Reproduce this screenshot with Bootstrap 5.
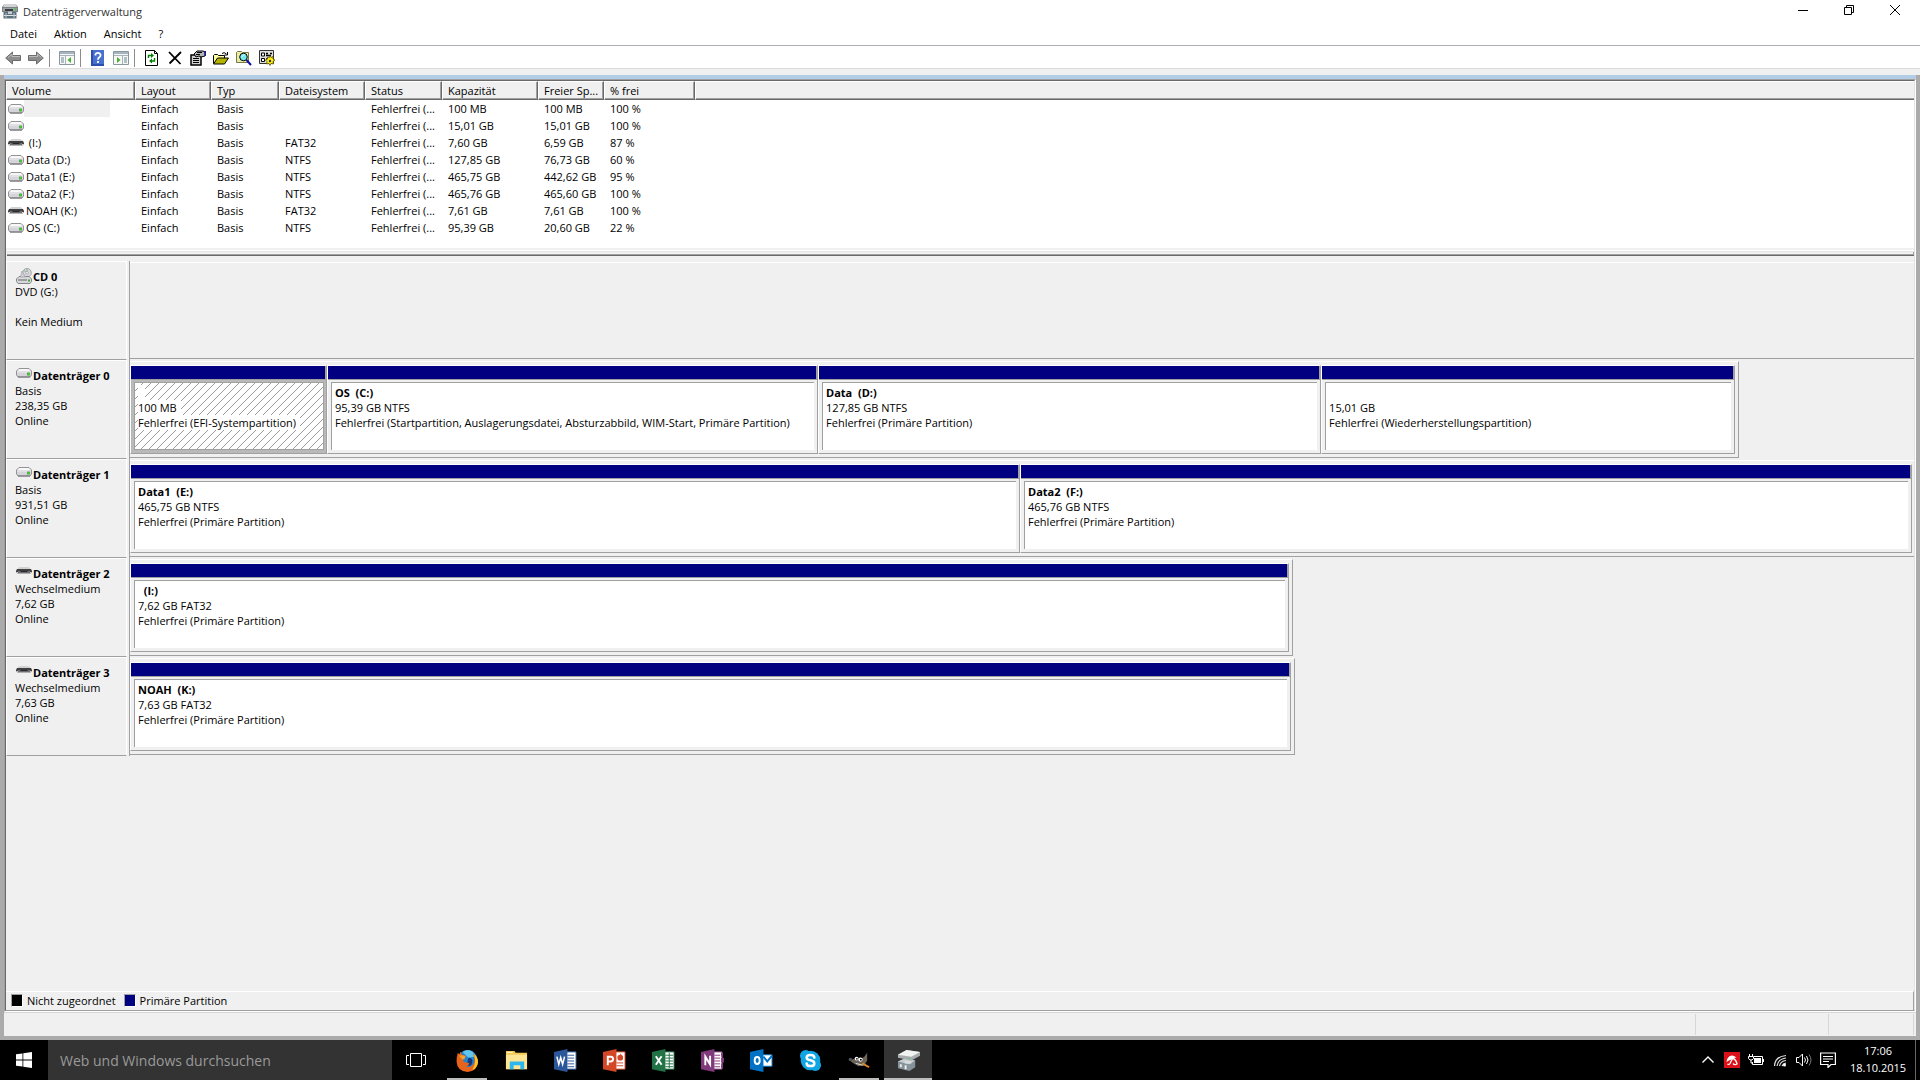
<!DOCTYPE html>
<html lang="de">
<head>
<meta charset="utf-8">
<title>Datenträgerverwaltung</title>
<meta name="viewport" content="width=device-width, initial-scale=1">
<link href="https://cdn.jsdelivr.net/npm/bootstrap@5.3.0/dist/css/bootstrap.min.css" rel="stylesheet">
<style>
  body { font-family: "Open Sans", "Noto Sans", sans-serif; font-size: 11px; line-height: 15px; color: #000; background: #fff; }
  button, input { font: inherit; }
  svg { display: block; flex: none; }
  .plain-btn { border: 0; background: none; color: inherit; padding: 0; display: flex; align-items: center; justify-content: center; }

  /* title, menu, toolbar */
  .titlebar { height: 23px; padding: 0 2px; }
  .titlebar h1 { font-size: 11px; line-height: 15px; color: #333; margin: 4px 0 0 5px; }
  .win-btn { width: 46px; height: 20px; }
  .menubar { height: 22px; padding: 0 0 2px 2px; gap: 1px; }
  .menubar .plain-btn { padding: 0 8px; }
  .toolbar { height: 24px; border-top: 1px solid #adadb5; border-bottom: 1px solid #dcdcdc; padding-left: 1px; padding-top: 2px; }
  .tool-btn { width: 23px; height: 20px; }
  .tool-sep { width: 1px; height: 18px; background: #8c8c8c; margin: 1px 5px 0 2px; }
  .under-toolbar { height: 6px; background: #f0f0f0; }

  /* window frame */
  .win-frame { background: #f0f0f0; border: solid #ababab; border-width: 0 4px 4px; }
  .accent-strip { height: 4px; background: #b4cde6; }
  .client { border: solid; border-width: 1px; border-color: #a0a0a0 #fff #fff #a0a0a0; }
  .client-inner { border: solid; border-width: 1px; border-color: #696969 #e3e3e3 #a0a0a0 #696969; }

  /* volume list */
  .volume-pane { height: 167px; background: #fff; overflow: hidden; }
  .volume-table { table-layout: fixed; width: 100%; border-collapse: separate; border-spacing: 0; }
  .volume-table th { height: 19px; padding: 0 0 1px 5px; font-weight: 400; line-height: 15px; background: #f0f0f0; border: 1px solid; border-color: #fff #696969 #696969 #fff; box-shadow: inset -1px -1px 0 #a0a0a0; white-space: nowrap; }
  .volume-table th:last-child { border-right: 0; box-shadow: inset 0 -1px 0 #a0a0a0; }
  .volume-table td { height: 17px; padding: 0 0 0 6px; line-height: 17px; white-space: nowrap; overflow: hidden; }
  .volume-table td:first-child { padding-left: 2px; }
  .vol-name { height: 17px; padding-left: 2px; white-space: pre; }
  .vol-name.active { width: 86px; background: #f0f0f0; }
  .splitter { height: 8px; margin-left: 1px; border-top: 2px solid #f0f0f0; border-bottom: 1px solid #696969; box-shadow: inset 0 1px 0 #fff, inset 0 2px 0 #e3e3e3, inset -1px -1px 0 #a0a0a0; }

  /* graphical view */
  .graph-pane { padding-top: 5px; }
  .disk-row { height: 99px; }
  .disk-label { width: 121px; border: solid; border-width: 1px; border-color: #fff #fff #a0a0a0 #fff; padding: 7px 0 0 8px; }
  .disk-area { border-left: 1px solid #a0a0a0; margin-left: 2px; }
  .disk-frame { display: grid; height: 97px; margin-top: 1px; border: solid; border-width: 1px 1px 1px 0; border-color: #fff #a0a0a0 #a0a0a0; padding: 3px 3px 3px 0; }
  .disk-frame.full { border-right: 0; padding-right: 2px; }
  .disk-name { font-weight: 700; height: 15px; padding-left: 1px; gap: 1px; }
  .partition { min-width: 0; border: solid; border-width: 1px; border-color: #fff #a0a0a0 #a0a0a0 #fff; text-align: left; display: flex; flex-direction: column; background: #f0f0f0; padding: 0; color: inherit; }
  .part-bar { height: 14px; background: #000080; border-right: 1px solid #a0a0a0; border-bottom: 1px solid #a0a0a0; align-self: stretch; }
  .part-body { flex: 1; align-self: stretch; margin: 2px 3px 3px; background: #fff; border: solid #a0a0a0; border-width: 1px 0 0 1px; padding: 2px 0 0 3px; white-space: pre; overflow: hidden; }
  .part-body span, .part-body b { display: block; width: fit-content; min-width: 7px; height: 15px; }
  .partition.selected { background: #b9b9b9; }
  .selected .part-body { border-width: 1px; margin-right: 2px; background: linear-gradient(135deg, #fff 45%, #9a9a9a 45% 55%, #fff 55%) 0 0 / 8px 8px; }
  .selected .part-body span, .selected .part-body b { background: #fff; padding-right: 4px; }

  .legend-bar { height: 19px; border-top: 1px solid #fff; border-right: 1px solid #a0a0a0; padding: 0 0 1px 5px; }
  .legend-key { width: 12px; height: 13px; border: 1px solid; border-color: #a0a0a0 #fff #fff #a0a0a0; margin-right: 4px; }
  .legend-text { margin-right: 8px; }
  .status-line { height: 24px; border-top: 1px solid #d7d7d7; padding: 1px 2px 1px 0; }
  .status-cell { border-right: 1px solid #d7d7d7; }

  /* taskbar */
  .taskbar { height: 40px; background: #000; color: #fff; }
  .start-btn { width: 48px; }
  .view-btn { width: 50px; padding-right: 2px; }
  .search-field { width: 344px; border: 0; background: #333; color: #fff; padding: 0 12px; font-size: 14px; }
  .search-field::placeholder { color: #9a9a9a; opacity: 1; }
  .task-btn { width: 48px; margin-left: 1px; border: solid transparent; border-width: 2px 0; }
  .task-btn svg { width: 23px; height: 23px; }
  .task-btn.running { background: linear-gradient(#bdbdbd, #bdbdbd) center bottom / 40px 2px no-repeat border-box; }
  .task-btn.current { background: #333; border-bottom-color: #bdbdbd; }
  .tray { gap: 8px; }
  .clock { width: 68px; margin-right: 3px; padding-bottom: 3px; text-align: center; line-height: 17px; }
  .desktop-edge { width: 5px; border-left: 1px solid #666; }
</style>
<script src="https://cdn.jsdelivr.net/npm/bootstrap@5.3.0/dist/js/bootstrap.bundle.min.js"></script>
</head>
<body class="d-flex flex-column vh-100 overflow-hidden">

<svg width="0" height="0" class="position-absolute" aria-hidden="true">
  <defs>
    <symbol id="i-drive" viewBox="0 0 16 10">
      <path d="M3 .5h10l2.500 2.500v4L14 9H2L.5 7V3z" fill="#d4d4da" stroke="#929297"/>
      <path d="M3.500 1h9l2 2h-13z" fill="#f8f8f8"/><path d="M1 3.500h14v1H1z" fill="#ececf0"/><path d="M2 9h12" stroke="#707075"/>
      <path d="M11 4.500h3v3h-3z" fill="#62a35c"/><path d="M12 5h1.500v2H12z" fill="#35d020"/>
    </symbol>
    <symbol id="i-removable" viewBox="0 0 16 10">
      <path d="M3.500 1h9L15 3H1z" fill="#d2d2d2"/><path d="M1 3h14l1 2v1.500l-3-1H3l-3 1V5z" fill="#3f3f42"/><path d="M3 5h10l2 2.500H1z" fill="#6e6e72"/><path d="M5 5h6l1 1H4z" fill="#29292b"/>
    </symbol>
    <symbol id="i-cd" viewBox="0 0 16 16">
      <circle cx="11" cy="4.800" r="4.300" fill="#d8d8de" stroke="#a2a2a8"/><circle cx="11" cy="4.800" r="1.300" fill="#fff" stroke="#888" stroke-width=".6"/><path d="M11 .8v3M8 2.500l2 1.500" stroke="#8bb48b"/>
      <path d="M3 8.500h10l2.500 2.500v2.500L14 15.500H2L.5 13.500V11z" fill="#d8d8dc" stroke="#85858a"/><path d="M2 11.500h9v1H2z" fill="#666"/><path d="M12 11.500h2v2h-2z" fill="#37b427"/><path d="M6 3L4.500 9h5z" fill="#d0d0d4" stroke="#96969a" stroke-width=".6"/>
    </symbol>
    <symbol id="i-office" viewBox="0 0 24 24"><path d="M0 3L14 0v24L0 21z"/></symbol>
  </defs>
</svg>

<header class="titlebar d-flex align-items-start">
  <svg class="mt-1" width="16" height="15" viewBox="0 0 16 15"><path d="M2.500 0h11L16 3v5H0V3z" fill="#7d8488"/><path d="M2.500 0h11L15 3H1z" fill="#d2d4d5"/><path d="M1 4h14v3H1z" fill="#9ea4a7"/><path d="M3 5h8v2H3z" fill="#363c40"/><path d="M12.500 4.500h2v2h-2z" fill="#41c041"/><path d="M1.500 8h13v6.500h-13z" fill="#5d717c"/><path d="M2 11.500h12" stroke="#dfe6ea"/><path d="M4 9v5M12 9v5" stroke="#b9c6cc"/><path d="M6 7.500h4V10H6z" fill="#c5d0d5"/></svg>
  <h1 class="fw-normal">Datenträgerverwaltung</h1>
  <div class="d-flex ms-auto">
    <button class="plain-btn win-btn" aria-label="Minimieren"><svg width="10" height="10" viewBox="0 0 10 10"><path d="M0 5.500h10" stroke="#000"/></svg></button>
    <button class="plain-btn win-btn" aria-label="Verkleinern"><svg width="10" height="10" viewBox="0 0 10 10" fill="none" stroke="#000"><path d="M.5 2.500h7v7h-7zM2.500 2.500v-2h7v7h-2"/></svg></button>
    <button class="plain-btn win-btn" aria-label="Schließen"><svg width="10" height="10" viewBox="0 0 10 10"><path d="M0 0l10 10M10 0L0 10" stroke="#000"/></svg></button>
  </div>
</header>

<nav class="menubar d-flex" aria-label="Menü">
  <button class="plain-btn">Datei</button><button class="plain-btn">Aktion</button><button class="plain-btn">Ansicht</button><button class="plain-btn">?</button>
</nav>

<div class="toolbar d-flex" role="toolbar" aria-label="Symbolleiste">
  <button class="plain-btn tool-btn" aria-label="Zurück"><svg width="16" height="14" viewBox="0 0 16 14"><path d="M7.500 1v3.500h8v5h-8V13L.7 7z" fill="#8d8d8d" stroke="#6b6b6b"/><path d="M3 6.500l4-3.500v2.500h8" stroke="#bcbcbc" fill="none"/></svg></button>
  <button class="plain-btn tool-btn" aria-label="Vorwärts"><svg width="16" height="14" viewBox="0 0 16 14"><path d="M8.500 1v3.500h-8v5h8V13l6.800-6z" fill="#8d8d8d" stroke="#6b6b6b"/><path d="M1 5.500h8.500V3l4 3.500" stroke="#bcbcbc" fill="none"/></svg></button>
  <div class="tool-sep"></div>
  <button class="plain-btn tool-btn" aria-label="Konsolenstruktur anzeigen"><svg width="16" height="14" viewBox="0 0 16 14"><path d="M.5.5h15v13H.5z" fill="#f7f7f5" stroke="#8b979f"/><path d="M1 1h14v2H1z" fill="#a6b4bd"/><path d="M1 4.500h14M6.500 5v8" stroke="#a6b4bd"/><path d="M2 7h3M2 9h3M2 11h3" stroke="#6f8696"/><path d="M12 6v6L8.500 9z" fill="#4aae3c"/></svg></button>
  <div class="tool-sep"></div>
  <button class="plain-btn tool-btn" aria-label="Hilfe"><svg width="13" height="16" viewBox="0 0 13 16"><path d="M0 0h13v16H0z" fill="#2c4fae"/><path d="M2 0h11v14H2z" fill="#4870cf"/><path d="M4.500 5.500V4.300Q5 2.800 7 2.800T9.600 5Q9.600 6.500 8.300 7.300T7 9.800M7 11v2" fill="none" stroke="#fff" stroke-width="1.800"/></svg></button>
  <button class="plain-btn tool-btn" aria-label="Aktionsbereich anzeigen"><svg width="16" height="14" viewBox="0 0 16 14"><path d="M.5.5h15v13H.5z" fill="#f7f7f5" stroke="#8b979f"/><path d="M1 1h14v2H1z" fill="#a6b4bd"/><path d="M1 4.500h14M9.500 5v8" stroke="#a6b4bd"/><path d="M11 7h3M11 9h3M11 11h3" stroke="#6f8696"/><path d="M4 6v6l3.500-3z" fill="#4aae3c"/></svg></button>
  <div class="tool-sep"></div>
  <button class="plain-btn tool-btn" aria-label="Aktualisieren"><svg width="13" height="16" viewBox="0 0 13 16"><path d="M.5.500h9l3 3v12H.5z" fill="#fff" stroke="#000"/><path d="M9.500.500v3h3" fill="none" stroke="#000"/><path d="M3.500 8V5.500H7M9.500 8v3H6" fill="none" stroke="#008000" stroke-width="1.400"/><path d="M6 3l3 2.500L6 8zM7 8.500L4 11l3 2.500z" fill="#008000"/></svg></button>
  <button class="plain-btn tool-btn" aria-label="Löschen"><svg width="14" height="14" viewBox="0 0 14 14"><path d="M1 1l11.500 12M13 1L1.500 12.500" stroke="#000" stroke-width="1.800"/></svg></button>
  <button class="plain-btn tool-btn" aria-label="Eigenschaften"><svg width="16" height="16" viewBox="0 0 16 16"><path d="M1 5h10v10H1z" fill="#d0d0d0" stroke="#000" stroke-width="1.500"/><path d="M3 8.500h6M3 10.500h6M3 12.500h6" stroke="#000"/><path d="M4 4l3-3h6l2 1v4l-4 1-2-1-3 1z" fill="#b5b5b5" stroke="#000"/><path d="M6 4.500h4M7 2.500h5" stroke="#000"/><path d="M14 1h2v5h-1z" fill="#1919a0"/></svg></button>
  <button class="plain-btn tool-btn" aria-label="Öffnen"><svg width="16" height="14" viewBox="0 0 16 14"><path d="M.5 12.500v-8l1-1h3l1 1h6v3" fill="#ffffa0" stroke="#000"/><path d="M.5 13l4-6h11l-4 6z" fill="#b4b400" stroke="#000"/><path d="M9 2.500q2-2 4.500.5M14.500 1v3h-3" fill="none" stroke="#000"/></svg></button>
  <button class="plain-btn tool-btn" aria-label="Suchen"><svg width="16" height="16" viewBox="0 0 16 16"><path d="M.5 12.500v-10l1-1h4l1 1h6v10z" fill="#ececa0" stroke="#77774a"/><circle cx="7.500" cy="7" r="3.800" fill="#6fe8f0" stroke="#000"/><path d="M5.500 7l3-2.500" stroke="#fff"/><path d="M10.500 10l4.500 5" stroke="#1010a8" stroke-width="2"/></svg></button>
  <button class="plain-btn tool-btn" aria-label="Einstellungen"><svg width="16" height="16" viewBox="0 0 16 16"><path d="M.5.500h14v13H.5z" fill="#dedede" stroke="#333"/><path d="M2.500 3h3v3h-3zM2.500 8.500h3v3h-3z" fill="#fff" stroke="#000"/><path d="M7 3.500h2M11 3.500h2M7 5.500h5M7 9h2" stroke="#000" stroke-width="1.500"/><path d="M11 5.500l1 2 2-1v2.500l2 1-2 1.500.5 2.500-2.500-.5-1 2-1-2-2.500.5.500-2.500-1.500-1.500 2-1V7l2 .5z" fill="#ffee10" stroke="#55500a" stroke-width=".8"/><circle cx="11" cy="11" r="1.200" fill="#333"/></svg></button>
</div>
<div class="under-toolbar"></div>

<main class="win-frame flex-fill d-flex flex-column">
  <div class="accent-strip"></div>
  <div class="client flex-fill d-flex flex-column">
    <div class="client-inner flex-fill d-flex flex-column">
      <section class="volume-pane">
        <table class="volume-table">
          <colgroup><col style="width:129px"><col style="width:76px"><col style="width:68px"><col style="width:86px"><col style="width:77px"><col style="width:96px"><col style="width:66px"><col style="width:91px"><col></colgroup>
          <thead><tr><th>Volume</th><th>Layout</th><th>Typ</th><th>Dateisystem</th><th>Status</th><th>Kapazität</th><th>Freier Sp...</th><th>% frei</th><th></th></tr></thead>
          <tbody>
            <tr><td><div class="d-flex align-items-center"><svg width="16" height="10"><use href="#i-drive"/></svg><div class="vol-name active"></div></div></td><td>Einfach</td><td>Basis</td><td></td><td>Fehlerfrei (...</td><td>100 MB</td><td>100 MB</td><td>100 %</td><td></td></tr>
            <tr><td><div class="d-flex align-items-center"><svg width="16" height="10"><use href="#i-drive"/></svg><div class="vol-name"></div></div></td><td>Einfach</td><td>Basis</td><td></td><td>Fehlerfrei (...</td><td>15,01 GB</td><td>15,01 GB</td><td>100 %</td><td></td></tr>
            <tr><td><div class="d-flex align-items-center"><svg width="16" height="10"><use href="#i-removable"/></svg><div class="vol-name"> (I:)</div></div></td><td>Einfach</td><td>Basis</td><td>FAT32</td><td>Fehlerfrei (...</td><td>7,60 GB</td><td>6,59 GB</td><td>87 %</td><td></td></tr>
            <tr><td><div class="d-flex align-items-center"><svg width="16" height="10"><use href="#i-drive"/></svg><div class="vol-name">Data (D:)</div></div></td><td>Einfach</td><td>Basis</td><td>NTFS</td><td>Fehlerfrei (...</td><td>127,85 GB</td><td>76,73 GB</td><td>60 %</td><td></td></tr>
            <tr><td><div class="d-flex align-items-center"><svg width="16" height="10"><use href="#i-drive"/></svg><div class="vol-name">Data1 (E:)</div></div></td><td>Einfach</td><td>Basis</td><td>NTFS</td><td>Fehlerfrei (...</td><td>465,75 GB</td><td>442,62 GB</td><td>95 %</td><td></td></tr>
            <tr><td><div class="d-flex align-items-center"><svg width="16" height="10"><use href="#i-drive"/></svg><div class="vol-name">Data2 (F:)</div></div></td><td>Einfach</td><td>Basis</td><td>NTFS</td><td>Fehlerfrei (...</td><td>465,76 GB</td><td>465,60 GB</td><td>100 %</td><td></td></tr>
            <tr><td><div class="d-flex align-items-center"><svg width="16" height="10"><use href="#i-removable"/></svg><div class="vol-name">NOAH (K:)</div></div></td><td>Einfach</td><td>Basis</td><td>FAT32</td><td>Fehlerfrei (...</td><td>7,61 GB</td><td>7,61 GB</td><td>100 %</td><td></td></tr>
            <tr><td><div class="d-flex align-items-center"><svg width="16" height="10"><use href="#i-drive"/></svg><div class="vol-name">OS (C:)</div></div></td><td>Einfach</td><td>Basis</td><td>NTFS</td><td>Fehlerfrei (...</td><td>95,39 GB</td><td>20,60 GB</td><td>22 %</td><td></td></tr>
          </tbody>
        </table>
      </section>
      <div class="splitter" role="separator"></div>

      <section class="graph-pane flex-fill">
        <div class="disk-row d-flex">
          <div class="disk-label flex-shrink-0"><div class="disk-name d-flex align-items-end"><svg width="16" height="16" viewBox="0 0 16 16"><use href="#i-cd"/></svg><span>CD 0</span></div><div>DVD (G:)</div><div>&nbsp;</div><div>Kein Medium</div></div>
          <div class="disk-area flex-fill"><div class="disk-frame full"></div></div>
        </div>
        <div class="disk-row d-flex">
          <div class="disk-label flex-shrink-0"><div class="disk-name d-flex align-items-start"><svg width="16" height="10"><use href="#i-drive"/></svg><span>Datenträger 0</span></div><div>Basis</div><div>238,35 GB</div><div>Online</div></div>
          <div class="disk-area flex-fill"><div class="disk-frame" style="width:90.2%;grid-template-columns:197fr 491fr 503fr 414fr">
            <button class="partition selected"><span class="part-bar"></span><span class="part-body"><b></b><span>100 MB</span><span>Fehlerfrei (EFI-Systempartition)</span></span></button>
            <button class="partition"><span class="part-bar"></span><span class="part-body"><b>OS  (C:)</b><span>95,39 GB NTFS</span><span>Fehlerfrei (Startpartition, Auslagerungsdatei, Absturzabbild, WIM-Start, Primäre Partition)</span></span></button>
            <button class="partition"><span class="part-bar"></span><span class="part-body"><b>Data  (D:)</b><span>127,85 GB NTFS</span><span>Fehlerfrei (Primäre Partition)</span></span></button>
            <button class="partition"><span class="part-bar"></span><span class="part-body"><b></b><span>15,01 GB</span><span>Fehlerfrei (Wiederherstellungspartition)</span></span></button>
          </div></div>
        </div>
        <div class="disk-row d-flex">
          <div class="disk-label flex-shrink-0"><div class="disk-name d-flex align-items-start"><svg width="16" height="10"><use href="#i-drive"/></svg><span>Datenträger 1</span></div><div>Basis</div><div>931,51 GB</div><div>Online</div></div>
          <div class="disk-area flex-fill"><div class="disk-frame full" style="grid-template-columns:890fr 892fr">
            <button class="partition"><span class="part-bar"></span><span class="part-body"><b>Data1  (E:)</b><span>465,75 GB NTFS</span><span>Fehlerfrei (Primäre Partition)</span></span></button>
            <button class="partition"><span class="part-bar"></span><span class="part-body"><b>Data2  (F:)</b><span>465,76 GB NTFS</span><span>Fehlerfrei (Primäre Partition)</span></span></button>
          </div></div>
        </div>
        <div class="disk-row d-flex">
          <div class="disk-label flex-shrink-0"><div class="disk-name d-flex align-items-start"><svg width="16" height="10"><use href="#i-removable"/></svg><span>Datenträger 2</span></div><div>Wechselmedium</div><div>7,62 GB</div><div>Online</div></div>
          <div class="disk-area flex-fill"><div class="disk-frame" style="width:65.2%">
            <button class="partition"><span class="part-bar"></span><span class="part-body"><b>  (I:)</b><span>7,62 GB FAT32</span><span>Fehlerfrei (Primäre Partition)</span></span></button>
          </div></div>
        </div>
        <div class="disk-row d-flex">
          <div class="disk-label flex-shrink-0"><div class="disk-name d-flex align-items-start"><svg width="16" height="10"><use href="#i-removable"/></svg><span>Datenträger 3</span></div><div>Wechselmedium</div><div>7,63 GB</div><div>Online</div></div>
          <div class="disk-area flex-fill"><div class="disk-frame" style="width:65.3%">
            <button class="partition"><span class="part-bar"></span><span class="part-body"><b>NOAH  (K:)</b><span>7,63 GB FAT32</span><span>Fehlerfrei (Primäre Partition)</span></span></button>
          </div></div>
        </div>
      </section>

      <div class="legend-bar d-flex align-items-center">
        <span class="legend-key" style="background:#000"></span><span class="legend-text">Nicht zugeordnet</span>
        <span class="legend-key" style="background:#000080"></span><span class="legend-text">Primäre Partition</span>
      </div>
    </div>
  </div>
  <footer class="status-line d-flex">
    <div class="status-cell flex-fill"></div><div class="status-cell" style="width:133px"></div><div class="status-cell" style="width:85px"></div>
  </footer>
</main>

<footer class="taskbar d-flex">
  <button class="plain-btn start-btn" aria-label="Start"><svg width="16" height="16" viewBox="0 0 16 16" fill="#fff"><path d="M0 2.300L6.500 1.400v6.200H0zM7.300 1.300L16 0v7.600H7.300zM0 8.400h6.500v6.200L0 13.700zM7.300 8.400H16V16l-8.700-1.300z"/></svg></button>
  <input class="search-field" type="text" aria-label="Suche" placeholder="Web und Windows durchsuchen">
  <button class="plain-btn view-btn" aria-label="Taskansicht"><svg width="20" height="14" viewBox="0 0 20 14" fill="none" stroke="#fff"><path d="M4.500.500h11v13h-11zM3 2.500H.5v9H3M17 2.500h2.500v9H17"/></svg></button>
  <button class="plain-btn task-btn running" aria-label="Firefox"><svg width="24" height="24" viewBox="0 0 24 24"><circle cx="12" cy="11.500" r="10.500" fill="#2385cc"/><path d="M7 3q5-4 11 0l1 5-6 1z" fill="#62c5ee"/><path d="M13 9q5 0 4 5t-6 3z" fill="#14377f"/><path d="M2 4l1.500 1.500L5 2.500 6 6l4 1-1 3-2 1q1 4 5 3l2 1q-2 4-5 3 5 2 8-1 3-3 2-8l-1-4q4 3 5 7 0 11-11 12Q1 23 .6 13 .5 8 2 4z" fill="#e7641c"/><path d="M19 5q4 4 4 9-1 6-6 8 3-5 3-10z" fill="#fbc52a"/><path d="M3 7l3-.5 4 .7-1 3-2 1-2-2z" fill="#f6a02c"/></svg></button>
  <button class="plain-btn task-btn" aria-label="Explorer"><svg width="24" height="24" viewBox="0 0 24 24"><path d="M1 2h9l1 2h12v17H1z" fill="#f3c953"/><path d="M1 6h22v15H1z" fill="#fde595"/><path d="M2 3h6v1H2z" fill="#fff7cf"/><path d="M5 13h15v8h-4v-4H9v4H5z" fill="#2ab6ee"/></svg></button>
  <button class="plain-btn task-btn" aria-label="Word"><svg width="24" height="24" viewBox="0 0 24 24"><path d="M12 3h11v18H12z" fill="#fff" stroke="#2b579a"/><path d="M14 6.500h7M14 9.500h7M14 12.500h7M14 15.500h7M14 18.500h7" stroke="#2b579a"/><use href="#i-office" fill="#2b579a"/><path d="M3 8l2 8 2-7 2 7 2-8" fill="none" stroke="#fff" stroke-width="1.600"/></svg></button>
  <button class="plain-btn task-btn" aria-label="PowerPoint"><svg width="24" height="24" viewBox="0 0 24 24"><path d="M12 3h11v18H12z" fill="#fff" stroke="#d24726"/><circle cx="18" cy="9" r="3" fill="#d24726"/><path d="M18.500 8.500V5M14 14.500h7M14 17.500h7" stroke="#d24726"/><use href="#i-office" fill="#d24726"/><path d="M5 17V8h3q2.500 0 2.500 2.500T8 13H5" fill="none" stroke="#fff" stroke-width="2"/></svg></button>
  <button class="plain-btn task-btn" aria-label="Excel"><svg width="24" height="24" viewBox="0 0 24 24"><path d="M12 3h11v18H12z" fill="#fff" stroke="#217346"/><path d="M14 6.500h8M14 9.500h8M14 12.500h8M14 15.500h8M14 18.500h8M18 4v16" stroke="#217346"/><use href="#i-office" fill="#217346"/><path d="M4 7.500l6 9M10 7.500l-6 9" stroke="#fff" stroke-width="2"/></svg></button>
  <button class="plain-btn task-btn" aria-label="OneNote"><svg width="24" height="24" viewBox="0 0 24 24"><path d="M12 3h10v18H12z" fill="#fff" stroke="#80397b"/><path d="M21 4h2v4h-2zM21 9h3v5h-3zM21 15h2v5h-2z" fill="#80397b"/><path d="M14 6.500h6M14 9.500h6M14 12.500h6M14 15.500h6M14 18.500h6" stroke="#80397b"/><use href="#i-office" fill="#80397b"/><path d="M4.500 17V8l5 8V7" fill="none" stroke="#fff" stroke-width="2"/></svg></button>
  <button class="plain-btn task-btn" aria-label="Outlook"><svg width="24" height="24" viewBox="0 0 24 24"><path d="M13 6h10v12H13z" fill="#fff" stroke="#0072c6"/><path d="M14 8l4 5 5-6" fill="none" stroke="#0072c6" stroke-width="2"/><use href="#i-office" fill="#0072c6"/><ellipse cx="7.500" cy="12" rx="2.600" ry="3.600" fill="none" stroke="#fff" stroke-width="2"/></svg></button>
  <button class="plain-btn task-btn" aria-label="Skype"><svg width="24" height="24" viewBox="0 0 24 24"><circle cx="12" cy="12" r="10.200" fill="#12a5e4"/><circle cx="7" cy="7" r="6" fill="#12a5e4"/><circle cx="17" cy="17" r="6" fill="#12a5e4"/><path d="M16 9q0-2.800-4-2.800T8 9q0 2 4 2.800t4 3.200q0 2.800-4 2.800T8 15" fill="none" stroke="#fff" stroke-width="2.600" stroke-linecap="round"/></svg></button>
  <button class="plain-btn task-btn running" aria-label="GIMP"><svg width="24" height="24" viewBox="0 0 24 24"><path d="M4 11l4-1 4 1 5-3 3-4v8l-3 5-6 1-5-3-3-2z" fill="#6b6357"/><circle cx="9" cy="10" r="2" fill="#fff"/><circle cx="13" cy="11" r="2.200" fill="#fff"/><circle cx="9.300" cy="10.200" r=".9"/><circle cx="13.400" cy="11.200" r="1"/><circle cx="2.500" cy="11" r="1.800" fill="#555"/><path d="M8 15l8 2" stroke="#ddd"/><path d="M15 15l7 4" stroke="#e08a2c" stroke-width="2"/></svg></button>
  <button class="plain-btn task-btn current" aria-label="Datenträgerverwaltung"><svg width="24" height="24" viewBox="0 0 24 24"><path d="M1 13l7-3 11 2v7l-6 4-12-3z" fill="#85929a"/><path d="M1 13l7-3 11 2-6 4z" fill="#c3cdd2"/><path d="M4 16v3M9 17v4" stroke="#e9eef0" stroke-width="2"/><path d="M1 6l9-5 14 2v4l-9 5L1 9z" fill="#a9adaf"/><path d="M1 6l9-5 14 2-9 5z" fill="#f1f2f2"/><path d="M8 12l7 1v2H8z" fill="#d8dcde"/><path d="M12 9.500h2v1h-2z" fill="#50d050"/></svg></button>

  <div class="tray d-flex align-items-center ms-auto">
    <button class="plain-btn" aria-label="Ausgeblendete Symbole"><svg width="16" height="16" viewBox="0 0 16 16"><path d="M2.500 10.500L8 5l5.500 5.500" fill="none" stroke="#fff" stroke-width="1.400"/></svg></button>
    <button class="plain-btn" aria-label="Avira"><svg width="16" height="16" viewBox="0 0 16 16"><path d="M0 0h16v16H0z" fill="#dc1018"/><path d="M2.500 10Q3 4.500 7.500 3.500q3-.5 5 2.500-3.500-1-5 1.500Q5 8 2.500 10z" fill="#fff"/><path d="M8.500 6.500L6 11.500q-1 1.500-2.500.5M8 6q4 1 5 6-2.500 1.500-4-.5" fill="none" stroke="#fff" stroke-width="1.300"/></svg></button>
    <button class="plain-btn" aria-label="Akku"><svg width="16" height="16" viewBox="0 0 16 16"><path d="M6 4.500h8.500v8h-10V10" fill="none" stroke="#fff"/><path d="M6 6h7v5H6zM15 7h1v3h-1z" fill="#fff"/><path d="M1.500 2v2M4.500 2v2M.500 4.500h5v2L4 8H2L.500 6.500zM3 8v3h2" fill="none" stroke="#fff"/></svg></button>
    <button class="plain-btn" aria-label="WLAN"><svg width="16" height="16" viewBox="0 0 16 16"><path d="M2.500 14Q3 4.500 14 3.500M5 14q1-7 9-8M7.500 14q1-5 6.500-5.500M10 14q1-2.500 4-3" fill="none" stroke="#ddd" stroke-width="1.200"/><circle cx="12.500" cy="13" r="1.500" fill="#fff"/></svg></button>
    <button class="plain-btn" aria-label="Lautstärke"><svg width="16" height="16" viewBox="0 0 16 16"><path d="M.5 5.500H3L6.500 2v12L3 10.500H.5z" fill="none" stroke="#fff"/><path d="M8.500 5.500q2 2.500 0 5M10.500 4q3 4 0 8" fill="none" stroke="#fff"/><path d="M13 2.500q4 5.500 0 11" fill="none" stroke="#777"/></svg></button>
    <button class="plain-btn" aria-label="Info-Center"><svg width="16" height="16" viewBox="0 0 16 16"><path d="M.6 1h14.800v11.500H11L8 15.500V12.500H.6z" fill="none" stroke="#fff" stroke-width="1.200"/><path d="M3 4.500h10M3 7h10M3 9.500h6" stroke="#fff"/></svg></button>
    <button class="plain-btn clock flex-column"><span>17:06</span><span>18.10.2015</span></button>
  </div>
  <div class="desktop-edge"></div>
</footer>
</body>
</html>
